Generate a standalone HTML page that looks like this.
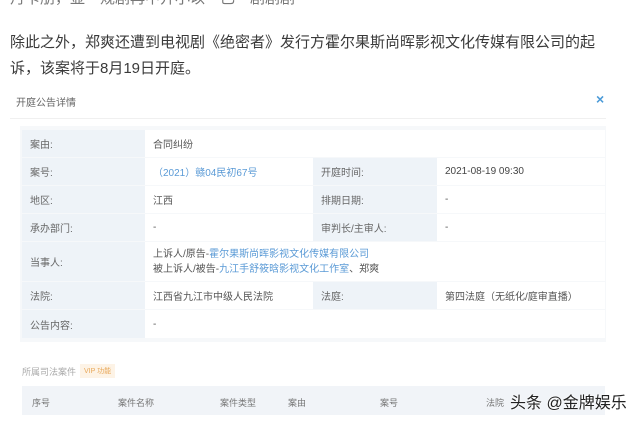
<!DOCTYPE html>
<html><head><meta charset="utf-8"><style>
body{margin:0;width:640px;height:421px;background:#fff;font-family:"Liberation Sans","Noto Sans CJK SC",sans-serif;position:relative;overflow:hidden;color:#333}
.a{position:absolute;white-space:nowrap}
.p{left:10px;font-size:15px;color:#3a3a3a}
.cell{position:absolute;font-size:10px;color:#555;display:flex;align-items:center;padding-left:8px;box-sizing:border-box}
.l{background:#eef3f8;color:#666}
.v{background:#fff}
.bl{color:#5a9ad6}
</style></head><body>
<div class="a" style="top:-13px;left:10px;font-size:15px;color:#777">丹卡朋，显一规剧再中开小以一已一剧剧剧</div>
<div class="a p" style="top:31px">除此之外，郑爽还遭到电视剧《绝密者》发行方霍尔果斯尚晖影视文化传媒有限公司的起</div>
<div class="a p" style="top:57px">诉，该案将于8月19日开庭。</div>
<div class="a" style="top:94px;left:16px;font-size:10px;color:#666">开庭公告详情</div>
<div class="a" style="top:91px;left:596px;font-size:14px;color:#4a9ad8;font-weight:bold">×</div>
<div class="a" style="top:118px;left:10px;width:596px;height:1px;background:#f0f0f0"></div>
<div class="a" style="top:126px;left:20px;width:586px;height:216px;background:#f6f8fa"></div>
<div class="cell l" style="left:22px;top:130px;width:123px;height:27px">案由:</div>
<div class="cell v" style="left:145px;top:130px;width:460px;height:27px">合同纠纷</div>
<div class="cell l" style="left:22px;top:158px;width:123px;height:27px">案号:</div>
<div class="cell v bl" style="left:145px;top:158px;width:168px;height:27px">（2021）赣04民初67号</div>
<div class="cell l" style="left:313px;top:158px;width:124px;height:27px">开庭时间:</div>
<div class="cell v" style="left:437px;top:158px;width:168px;height:27px;color:#444">2021-08-19 09:30</div>
<div class="cell l" style="left:22px;top:186px;width:123px;height:27px">地区:</div>
<div class="cell v" style="left:145px;top:186px;width:168px;height:27px">江西</div>
<div class="cell l" style="left:313px;top:186px;width:124px;height:27px">排期日期:</div>
<div class="cell v" style="left:437px;top:186px;width:168px;height:27px">-</div>
<div class="cell l" style="left:22px;top:214px;width:123px;height:27px">承办部门:</div>
<div class="cell v" style="left:145px;top:214px;width:168px;height:27px">-</div>
<div class="cell l" style="left:313px;top:214px;width:124px;height:27px">审判长/主审人:</div>
<div class="cell v" style="left:437px;top:214px;width:168px;height:27px">-</div>
<div class="cell l" style="left:22px;top:242px;width:123px;height:39px">当事人:</div>
<div class="cell v" style="left:145px;top:242px;width:460px;height:39px;flex-direction:column;align-items:flex-start;justify-content:center;line-height:15px">
<div>上诉人/原告-<span class="bl">霍尔果斯尚晖影视文化传媒有限公司</span></div>
<div>被上诉人/被告-<span class="bl">九江手舒筱晗影视文化工作室</span>、郑爽</div></div>
<div class="cell l" style="left:22px;top:282px;width:123px;height:27px">法院:</div>
<div class="cell v" style="left:145px;top:282px;width:168px;height:27px">江西省九江市中级人民法院</div>
<div class="cell l" style="left:313px;top:282px;width:124px;height:27px">法庭:</div>
<div class="cell v" style="left:437px;top:282px;width:168px;height:27px">第四法庭（无纸化/庭审直播）</div>
<div class="cell l" style="left:22px;top:310px;width:123px;height:28px">公告内容:</div>
<div class="cell v" style="left:145px;top:310px;width:460px;height:28px">-</div>
<div class="a" style="top:365px;left:22px;font-size:9px;color:#aaa">所属司法案件</div>
<div class="a" style="top:364px;left:80px;font-size:7px;color:#e8a85a;background:#fdf3e6;padding:2px 4px">VIP 功能</div>
<div class="a" style="top:386px;left:22px;width:583px;height:29px;background:#f1f4f8"></div>
<div class="a" style="top:396px;left:32px;font-size:9px;color:#777">序号</div>
<div class="a" style="top:396px;left:118px;font-size:9px;color:#777">案件名称</div>
<div class="a" style="top:396px;left:220px;font-size:9px;color:#777">案件类型</div>
<div class="a" style="top:396px;left:288px;font-size:9px;color:#777">案由</div>
<div class="a" style="top:396px;left:380px;font-size:9px;color:#777">案号</div>
<div class="a" style="top:396px;left:486px;font-size:9px;color:#777">法院</div>
<div class="a" style="top:389px;left:510px;font-size:16px;color:#222;text-shadow:0 0 2px #fff,0 0 2px #fff">头条 @金牌娱乐</div>
</body></html>
